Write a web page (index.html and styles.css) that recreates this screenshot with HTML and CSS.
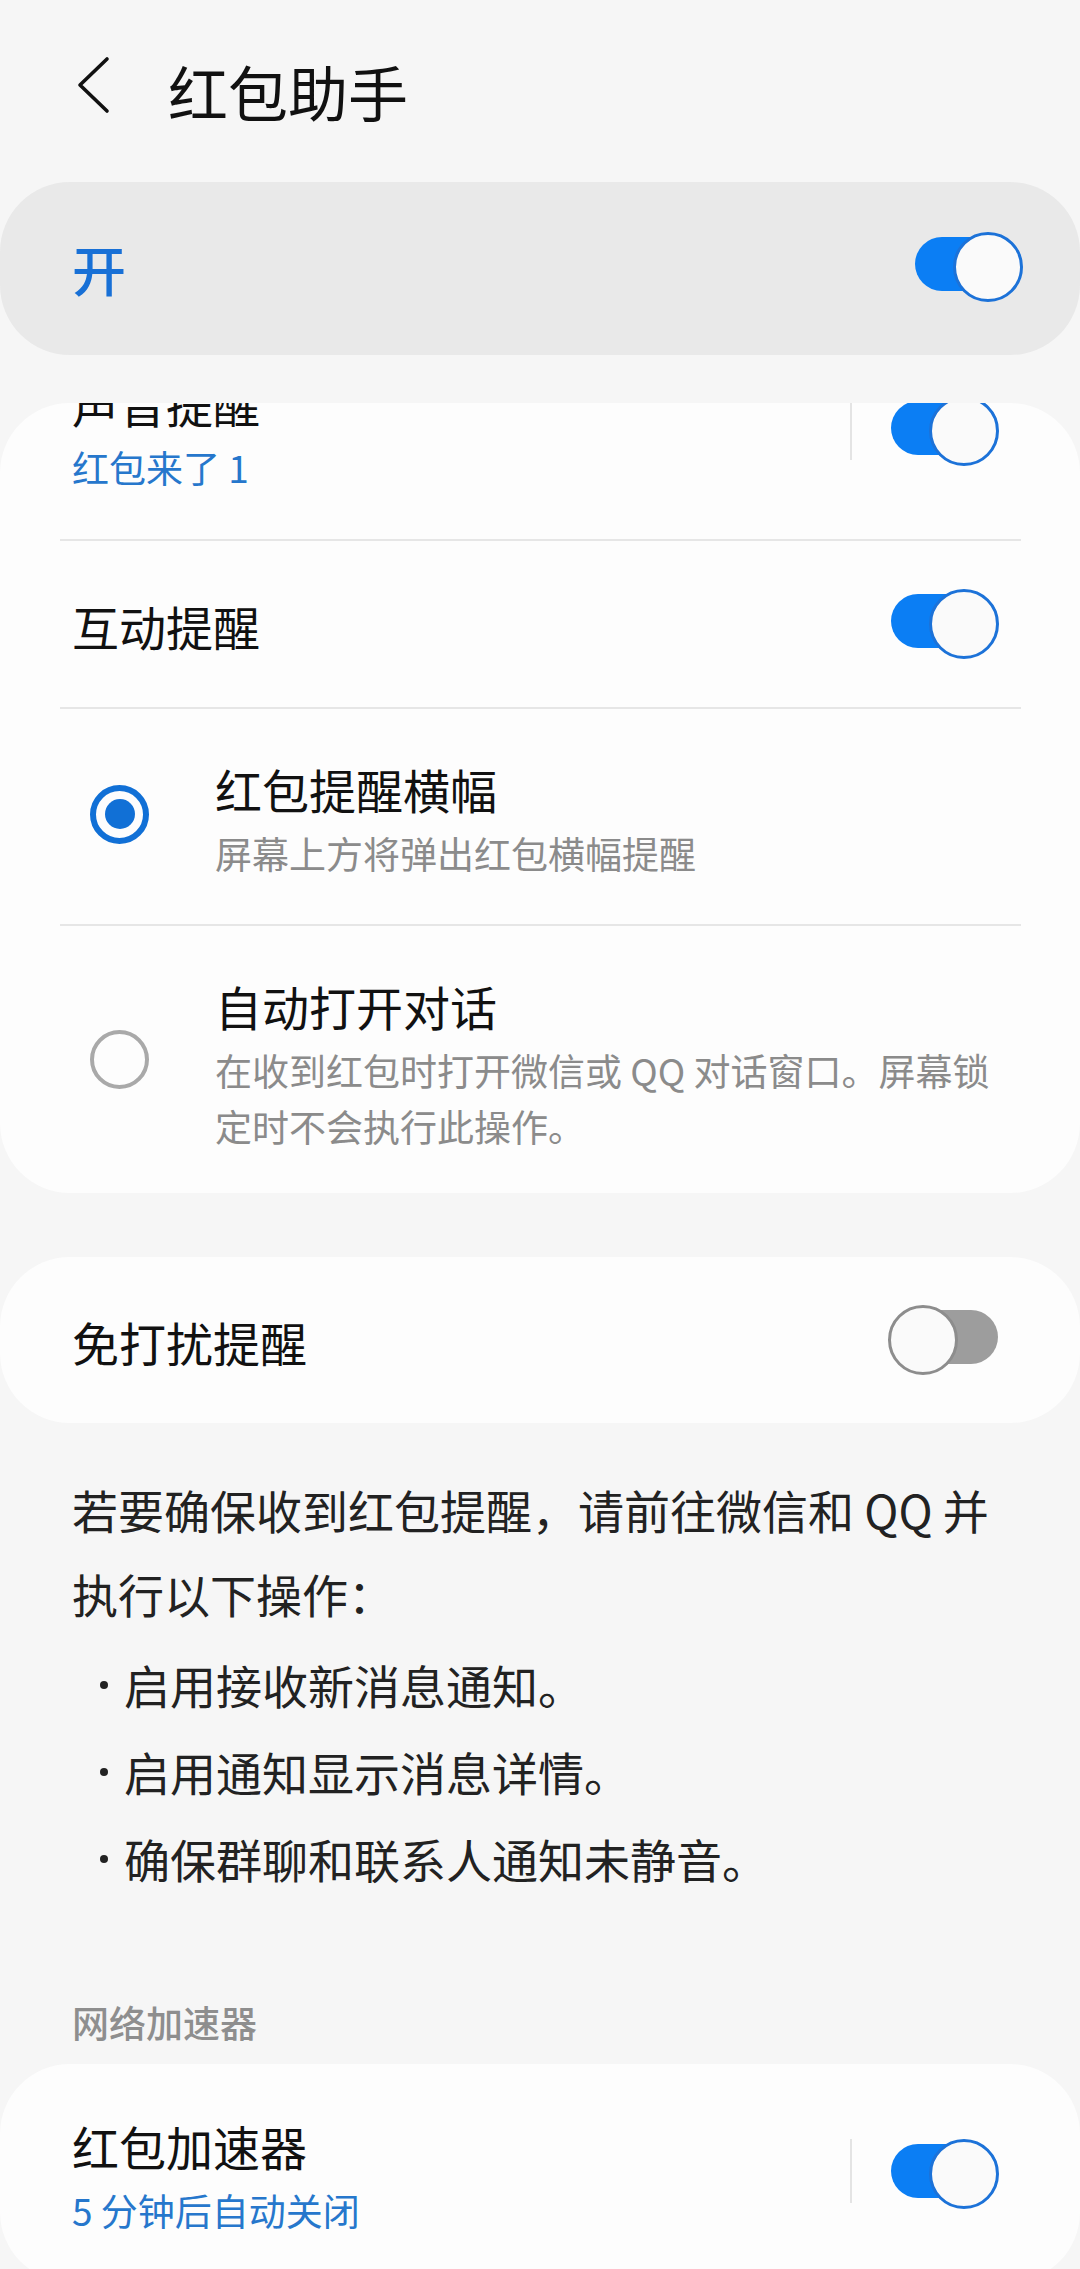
FILE: index.html
```html
<!DOCTYPE html>
<html lang="zh-CN">
<head>
  <meta charset="UTF-8" />
  <meta name="viewport" content="width=device-width, initial-scale=1" />
  <title>红包助手</title>
  <link rel="stylesheet" href="styles.css">
</head>
<body>
  <header class="app-bar">
    <svg class="back-icon" viewBox="0 0 34 58" width="34" height="58" aria-hidden="true">
      <polyline points="30,3 3,29 30,55" fill="none" stroke="#111" stroke-width="3.6" stroke-linecap="round" stroke-linejoin="round" />
    </svg>
    <h1 class="page-title">红包助手</h1>
  </header>

  <main>
    <section class="card card-master">
      <span class="master-label">开</span>
      <span class="switch on"></span>
    </section>

    <section class="card card-list">
      <div class="row row-clipped">
        <div class="row-text">
          <div class="row-title">声音提醒</div>
          <div class="row-sub blue">红包来了 1</div>
        </div>
        <span class="v-divider"></span>
        <span class="switch on"></span>
      </div>
      <div class="row-divider"></div>

      <div class="row row-single">
        <div class="row-text">
          <div class="row-title">互动提醒</div>
        </div>
        <span class="switch on"></span>
      </div>
      <div class="row-divider"></div>

      <div class="row row-radio">
        <span class="radio checked"></span>
        <div class="row-text">
          <div class="row-title">红包提醒横幅</div>
          <div class="row-sub">屏幕上方将弹出红包横幅提醒</div>
        </div>
      </div>
      <div class="row-divider"></div>

      <div class="row row-radio row-last">
        <span class="radio"></span>
        <div class="row-text">
          <div class="row-title">自动打开对话</div>
          <div class="row-sub">在收到红包时打开微信或 QQ 对话窗口。屏幕锁定时不会执行此操作。</div>
        </div>
      </div>
    </section>

    <section class="card">
      <div class="row row-single dnd">
        <div class="row-text">
          <div class="row-title">免打扰提醒</div>
        </div>
        <span class="switch"></span>
      </div>
    </section>

    <section class="notice">
      <p>若要确保收到红包提醒，请前往微信和 QQ 并执行以下操作：</p>
      <ul class="steps">
        <li>启用接收新消息通知。</li>
        <li>启用通知显示消息详情。</li>
        <li>确保群聊和联系人通知未静音。</li>
      </ul>
    </section>

    <h2 class="group-title">网络加速器</h2>

    <section class="card card-list">
      <div class="row row-accel">
        <div class="row-text">
          <div class="row-title">红包加速器</div>
          <div class="row-sub blue">5 分钟后自动关闭</div>
        </div>
        <span class="v-divider"></span>
        <span class="switch on"></span>
      </div>
    </section>
  </main>
</body>
</html>
```

FILE: styles.css
```css
* { margin: 0; padding: 0; box-sizing: border-box; }
html, body {
  height: 2269px;
  overflow: hidden;
}
body {
  font-family: "Noto Sans CJK SC", "Noto Sans", sans-serif;
  background: #f6f6f6;
  color: #111;
}

/* top bar */
.app-bar {
  height: 182px;
  display: flex;
  align-items: center;
  padding-left: 77px;
}
.back-icon {
  margin-bottom: 12px;
}
.page-title {
  margin-left: 57px;
  font-size: 60px;
  font-weight: 400;
  line-height: 1;
  color: #111;
}

/* cards */
.card {
  background: #fdfdfd;
  border-radius: 70px;
  overflow: hidden;
}
.card-master {
  background: #e9e9e9;
  display: flex;
  align-items: center;
  justify-content: space-between;
  padding: 55px 57px 54px 72px;
}
.master-label {
  font-size: 54px;
  line-height: 64px;
  font-weight: 500;
  color: #1870d6;
}

.card-list { margin-top: 48px; }
.card-list + .card { margin-top: 64px; }

.row {
  display: flex;
  align-items: center;
  padding: 48px 81px 44px 72px;
}
.row-clipped { margin-top: -80px; }
.row-single { padding-top: 53px; padding-bottom: 49px; }
.row-radio { padding: 48px 70px 43px 90px; }
.row-last { padding-bottom: 39px; }
.row-accel { padding-top: 50px; }

.row-text { flex: 1; }
.row-radio .row-text { margin-left: 66px; }
.row-title {
  font-size: 47px;
  line-height: 64px;
  color: #111;
}
.row-sub {
  margin-top: 4px;
  font-size: 37px;
  line-height: 56px;
  color: #8b8b8b;
}
.row-sub.blue { color: #2677cc; }

.row-divider {
  height: 2px;
  margin: 0 59px 0 60px;
  background: #e6e6e6;
}
.v-divider {
  width: 2px;
  height: 64px;
  margin-right: 36px;
  margin-top: -10px;
  background: #e4e4e4;
}

/* switch: nudged up 5px against the text, as on the device */
.switch {
  position: relative;
  flex: none;
  width: 111px;
  height: 64px;
  margin-top: -10px;
}
.switch::before {
  content: "";
  position: absolute;
  left: 3px;
  right: 1px;
  top: 5px;
  height: 54px;
  border-radius: 27px;
  background: #9d9d9d;
}
.switch::after {
  content: "";
  position: absolute;
  left: 0;
  top: 0;
  width: 64px;
  height: 64px;
  border-radius: 50%;
  background: #fafafa;
  border: 3px solid #8d8d8d;
}
.switch.on::before { background: #0b7ef4; }
.switch.on::after {
  left: auto;
  right: 0;
  border-color: #1c72d8;
}

/* radio */
.radio {
  flex: none;
  width: 59px;
  height: 59px;
  border-radius: 50%;
  border: 4px solid #a9a9a9;
  margin-top: -10px;
  display: flex;
  align-items: center;
  justify-content: center;
}
.radio.checked {
  border: 6px solid #1170d6;
}
.radio.checked::after {
  content: "";
  width: 30px;
  height: 30px;
  border-radius: 50%;
  background: #1170d6;
}

/* help text */
.notice {
  margin-top: 44px;
  padding: 0 70px 0 72px;
  font-size: 46px;
  color: #222;
}
.notice p { line-height: 84px; }
.steps {
  list-style: none;
  margin-top: 6px;
}
.steps li {
  display: flex;
  align-items: center;
  line-height: 87px;
}
.steps li::before {
  content: "";
  width: 8px;
  height: 8px;
  border-radius: 50%;
  background: #222;
  margin-left: 28px;
  margin-right: 16px;
}

.group-title {
  margin-top: 95px;
  padding-left: 72px;
  font-size: 37px;
  line-height: 50px;
  font-weight: 500;
  color: #8e8e8e;
}
.group-title + .card-list { margin-top: 17px; }
```
